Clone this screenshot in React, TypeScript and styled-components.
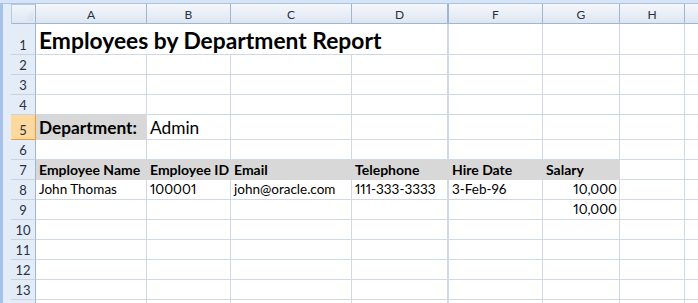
import React from 'react'
import styled, { createGlobalStyle, css } from 'styled-components'

const GlobalStyle = createGlobalStyle`
  html, body {
    margin: 0;
    padding: 0;
    background: #ffffff;
    overflow: hidden;
  }
  body {
    font-family: Lato, 'Liberation Sans', sans-serif;
    color: #000;
  }
`

const GRID = '#d0d7e5'
const HEADER_LINE = '#9eb6ce'
const FILL = '#d8d8d8'

const columns = [
  { label: 'A', width: 111 },
  { label: 'B', width: 84 },
  { label: 'C', width: 121 },
  { label: 'D', width: 97, hiddenNext: true },
  { label: 'F', width: 94 },
  { label: 'G', width: 77 },
  { label: 'H', width: 65 },
  { label: '', width: 60 },
]

// row 14 only peeks in at the bottom edge
const rowHeights = [31, 20, 20, 20, 25, 20, 20, 20, 20, 20, 20, 20, 20, 20]
const VISIBLE_ROWS = 13

type CellData = {
  text?: string
  span?: number
  bold?: boolean
  size?: number
  fill?: boolean
  align?: 'left' | 'right'
}

// sparse sheet contents, keyed by row number
const sheet: Record<number, CellData[]> = {
  1: [{ text: 'Employees by Department Report', span: 4, bold: true, size: 22.8 }],
  5: [
    { text: 'Department:', bold: true, size: 17.3, fill: true },
    { text: 'Admin', size: 17.3 },
  ],
  7: ['Employee Name', 'Employee ID', 'Email', 'Telephone', 'Hire Date', 'Salary'].map(
    (t) => ({ text: t, bold: true, fill: true, size: 14 })
  ),
  8: [
    { text: 'John Thomas' },
    { text: '100001' },
    { text: 'john@oracle.com' },
    { text: '111-333-3333' },
    { text: '3-Feb-96' },
    { text: '10,000', align: 'right' },
  ],
  9: [{}, {}, {}, {}, {}, { text: '10,000', align: 'right' }],
}

const SELECTED_ROW = 5

const Page = styled.div`
  width: 698px;
  height: 303px;
  overflow: hidden;
  display: flex;
  flex-direction: column;
`

const TopBand = styled.div`
  height: 3px;
  flex: none;
  background: #d6e4f5;
  border-bottom: 1px solid #a8c4e8;
`

const Body = styled.div`
  flex: 1;
  display: flex;
  min-height: 0;
`

const Strip = styled.div`
  width: 3px;
  flex: none;
  background: #a6c2e8;
`

const Gutter = styled.div`
  width: 8px;
  flex: none;
  background: #e4ecf7;
`

const Sheet = styled.div<{ $cols: string; $rows: string }>`
  display: grid;
  grid-template-columns: ${(p) => p.$cols};
  grid-template-rows: ${(p) => p.$rows};
  flex: none;
`

const Corner = styled.div`
  position: relative;
  box-sizing: border-box;
  background: linear-gradient(#f2f6fb, #dce6f3);
  border: 1px solid #b6cbe2;
  border-bottom-color: ${HEADER_LINE};
  border-right-color: ${HEADER_LINE};

  &::after {
    content: '';
    position: absolute;
    right: 2px;
    bottom: 2px;
    width: 12px;
    height: 11px;
    background: linear-gradient(135deg, #f4f7fb, #d5dfec);
    clip-path: polygon(100% 0, 100% 100%, 0 100%);
  }
`

const ColHeader = styled.div<{ $thick?: boolean }>`
  box-sizing: border-box;
  display: flex;
  align-items: center;
  justify-content: center;
  font-size: 12px;
  color: #27313f;
  background: linear-gradient(#f5f8fc 0%, #e9eff7 50%, #dce5f1 100%);
  border-right: ${(p) => (p.$thick ? '2px' : '1px')} solid ${HEADER_LINE};
  border-bottom: 1px solid ${HEADER_LINE};
  padding-top: 1px;
`

const RowHeader = styled.div<{ $selected?: boolean }>`
  box-sizing: border-box;
  display: flex;
  align-items: flex-end;
  justify-content: center;
  padding-bottom: 1px;
  font-size: 13px;
  color: #27313f;
  background: #e4ecf7;
  border-right: 1px solid ${HEADER_LINE};
  border-bottom: 1px solid #c5d3e4;
  ${(p) =>
    p.$selected &&
    css`
      background: #fed99d;
      border-right-color: #f29b3a;
      border-bottom-color: #f29b3a;
    `}
`

const Cell = styled.div<{
  $span?: number
  $bold?: boolean
  $size?: number
  $fill?: boolean
  $align?: 'left' | 'right'
  $thick?: boolean
}>`
  box-sizing: border-box;
  grid-column: span ${(p) => p.$span ?? 1};
  display: flex;
  align-items: flex-end;
  justify-content: ${(p) => (p.$align === 'right' ? 'flex-end' : 'flex-start')};
  padding: 0 2px 1px 3px;
  white-space: nowrap;
  overflow: visible;
  font-size: ${(p) => p.$size ?? 13.5}px;
  font-weight: ${(p) => (p.$bold ? 700 : 400)};
  font-variant-numeric: proportional-nums;
  line-height: 1.15;
  background: ${(p) => (p.$fill ? FILL : '#fff')};
  border-right: ${(p) => (p.$thick ? '2px' : '1px')} solid ${(p) => (p.$fill ? FILL : GRID)};
  border-bottom: 1px solid ${(p) => (p.$fill ? FILL : GRID)};
`

export default function App() {
  const cols = ['25px', ...columns.map((c) => `${c.width}px`)].join(' ')
  const rows = ['20px', ...rowHeights.map((h) => `${h}px`)].join(' ')

  return (
    <Page>
      <GlobalStyle />
      <TopBand />
      <Body>
        <Strip />
        <Gutter />
        <Sheet $cols={cols} $rows={rows}>
          <Corner />
          {columns.map((c, i) => (
            <ColHeader key={`h${i}`} $thick={c.hiddenNext}>
              {c.label}
            </ColHeader>
          ))}

          {rowHeights.map((_, r) => {
            const rowNum = r + 1
            const data = sheet[rowNum] ?? []
            const cells: React.ReactNode[] = []
            let col = 0
            data.forEach((d, i) => {
              const span = d.span ?? 1
              const last = col + span - 1
              cells.push(
                <Cell
                  key={`c${rowNum}-${i}`}
                  $span={span}
                  $bold={d.bold}
                  $size={d.size}
                  $fill={d.fill}
                  $align={d.align}
                  $thick={columns[last].hiddenNext}
                >
                  {d.text}
                </Cell>
              )
              col += span
            })
            for (; col < columns.length; col++) {
              cells.push(
                <Cell key={`e${rowNum}-${col}`} $thick={columns[col].hiddenNext} />
              )
            }
            return (
              <React.Fragment key={`r${rowNum}`}>
                <RowHeader $selected={rowNum === SELECTED_ROW}>
                  {rowNum <= VISIBLE_ROWS ? rowNum : null}
                </RowHeader>
                {cells}
              </React.Fragment>
            )
          })}
        </Sheet>
      </Body>
    </Page>
  )
}
